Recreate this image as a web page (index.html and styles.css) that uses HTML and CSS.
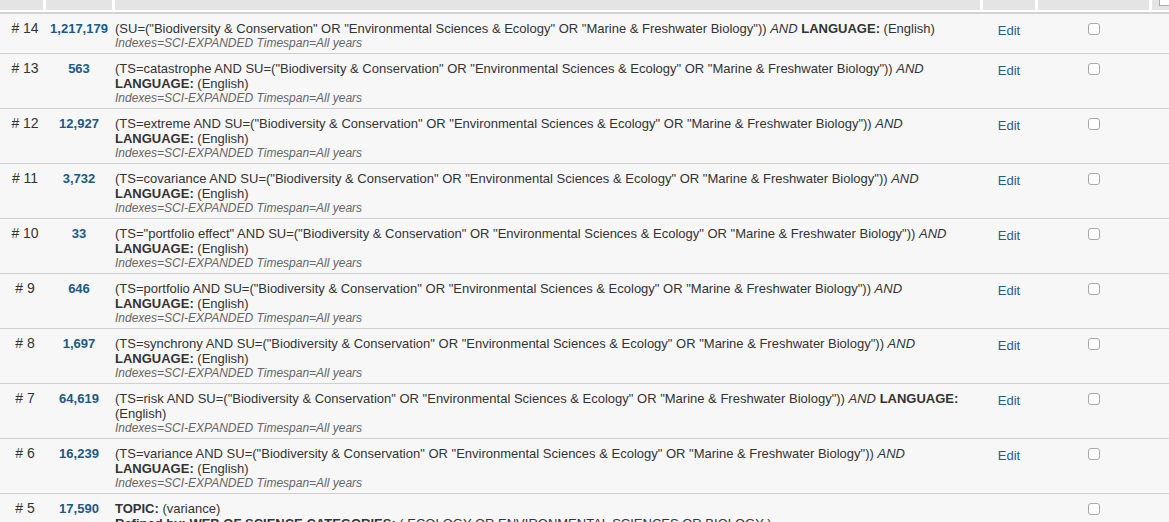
FILE: index.html
```html
<!DOCTYPE html>
<html>
<head>
<meta charset="utf-8">
<link rel="stylesheet" href="styles.css">
</head>
<body>
<div class="history">
  <div class="head">
    <div class="hcell"></div>
    <div class="hcell"></div>
    <div class="hcell"></div>
    <div class="hcell"></div>
    <div class="hcell"></div>
    <div class="hcell last"><span class="stub"></span></div>
  </div>
  <div class="headline"></div>

  <div class="row">
    <div class="num"># 14</div>
    <div class="count">1,217,179</div>
    <div class="query">(SU=("Biodiversity &amp; Conservation" OR "Environmental Sciences &amp; Ecology" OR "Marine &amp; Freshwater Biology")) <i>AND</i> <b>LANGUAGE:</b> (English)<div class="idx">Indexes=SCI-EXPANDED Timespan=All years</div></div>
    <div class="edit"><a href="#">Edit</a></div>
    <div class="chk"><input type="checkbox"></div>
    <div></div>
  </div>

  <div class="row">
    <div class="num"># 13</div>
    <div class="count">563</div>
    <div class="query">(TS=catastrophe AND SU=("Biodiversity &amp; Conservation" OR "Environmental Sciences &amp; Ecology" OR "Marine &amp; Freshwater Biology")) <i>AND</i> <b>LANGUAGE:</b> (English)<div class="idx">Indexes=SCI-EXPANDED Timespan=All years</div></div>
    <div class="edit"><a href="#">Edit</a></div>
    <div class="chk"><input type="checkbox"></div>
    <div></div>
  </div>

  <div class="row">
    <div class="num"># 12</div>
    <div class="count">12,927</div>
    <div class="query">(TS=extreme AND SU=("Biodiversity &amp; Conservation" OR "Environmental Sciences &amp; Ecology" OR "Marine &amp; Freshwater Biology")) <i>AND</i> <b>LANGUAGE:</b> (English)<div class="idx">Indexes=SCI-EXPANDED Timespan=All years</div></div>
    <div class="edit"><a href="#">Edit</a></div>
    <div class="chk"><input type="checkbox"></div>
    <div></div>
  </div>

  <div class="row">
    <div class="num"># 11</div>
    <div class="count">3,732</div>
    <div class="query">(TS=covariance AND SU=("Biodiversity &amp; Conservation" OR "Environmental Sciences &amp; Ecology" OR "Marine &amp; Freshwater Biology")) <i>AND</i> <b>LANGUAGE:</b> (English)<div class="idx">Indexes=SCI-EXPANDED Timespan=All years</div></div>
    <div class="edit"><a href="#">Edit</a></div>
    <div class="chk"><input type="checkbox"></div>
    <div></div>
  </div>

  <div class="row">
    <div class="num"># 10</div>
    <div class="count">33</div>
    <div class="query">(TS="portfolio effect" AND SU=("Biodiversity &amp; Conservation" OR "Environmental Sciences &amp; Ecology" OR "Marine &amp; Freshwater Biology")) <i>AND</i> <b>LANGUAGE:</b> (English)<div class="idx">Indexes=SCI-EXPANDED Timespan=All years</div></div>
    <div class="edit"><a href="#">Edit</a></div>
    <div class="chk"><input type="checkbox"></div>
    <div></div>
  </div>

  <div class="row">
    <div class="num"># 9</div>
    <div class="count">646</div>
    <div class="query">(TS=portfolio AND SU=("Biodiversity &amp; Conservation" OR "Environmental Sciences &amp; Ecology" OR "Marine &amp; Freshwater Biology")) <i>AND</i> <b>LANGUAGE:</b> (English)<div class="idx">Indexes=SCI-EXPANDED Timespan=All years</div></div>
    <div class="edit"><a href="#">Edit</a></div>
    <div class="chk"><input type="checkbox"></div>
    <div></div>
  </div>

  <div class="row">
    <div class="num"># 8</div>
    <div class="count">1,697</div>
    <div class="query">(TS=synchrony AND SU=("Biodiversity &amp; Conservation" OR "Environmental Sciences &amp; Ecology" OR "Marine &amp; Freshwater Biology")) <i>AND</i> <b>LANGUAGE:</b> (English)<div class="idx">Indexes=SCI-EXPANDED Timespan=All years</div></div>
    <div class="edit"><a href="#">Edit</a></div>
    <div class="chk"><input type="checkbox"></div>
    <div></div>
  </div>

  <div class="row">
    <div class="num"># 7</div>
    <div class="count">64,619</div>
    <div class="query">(TS=risk AND SU=("Biodiversity &amp; Conservation" OR "Environmental Sciences &amp; Ecology" OR "Marine &amp; Freshwater Biology")) <i>AND</i> <b>LANGUAGE:</b> (English)<div class="idx">Indexes=SCI-EXPANDED Timespan=All years</div></div>
    <div class="edit"><a href="#">Edit</a></div>
    <div class="chk"><input type="checkbox"></div>
    <div></div>
  </div>

  <div class="row">
    <div class="num"># 6</div>
    <div class="count">16,239</div>
    <div class="query">(TS=variance AND SU=("Biodiversity &amp; Conservation" OR "Environmental Sciences &amp; Ecology" OR "Marine &amp; Freshwater Biology")) <i>AND</i> <b>LANGUAGE:</b> (English)<div class="idx">Indexes=SCI-EXPANDED Timespan=All years</div></div>
    <div class="edit"><a href="#">Edit</a></div>
    <div class="chk"><input type="checkbox"></div>
    <div></div>
  </div>

  <div class="row">
    <div class="num"># 5</div>
    <div class="count">17,590</div>
    <div class="query"><b>TOPIC:</b> (variance)<div><b>Refined by: WEB OF SCIENCE CATEGORIES:</b> ( ECOLOGY OR ENVIRONMENTAL SCIENCES OR BIOLOGY )</div><div class="idx">Indexes=SCI-EXPANDED Timespan=All years</div></div>
    <div class="edit"></div>
    <div class="chk"><input type="checkbox"></div>
    <div></div>
  </div>
</div>
</body>
</html>
```

FILE: styles.css
```css
html, body {
  margin: 0;
  padding: 0;
  background: #f7f7f7;
  overflow: hidden;
}

.history {
  font-family: "Liberation Sans", Arial, Helvetica, sans-serif;
  font-size: 13px;
  line-height: 15px;
  color: #333;
  width: 1169px;
}

.head {
  display: grid;
  grid-template-columns: 43px 66px 865px 52px 111px 17px;
  column-gap: 3px;
  background: #fff;
  padding-bottom: 2px;
}

.hcell {
  height: 10px;
  background: #e4e4e4;
}

.hcell.last {
  position: relative;
}

.stub {
  position: absolute;
  left: 7px;
  top: 0;
  width: 12px;
  height: 5px;
  background: #fff;
  border: 1px solid #aaa;
  border-top: none;
}

.headline {
  height: 2px;
  background: #d2d2d2;
}

.row {
  display: grid;
  grid-template-columns: 43px 66px 865px 52px 111px 17px;
  column-gap: 3px;
  border-bottom: 1px solid #d0d0d0;
  padding: 7px 0 2px;
}

.num {
  text-align: center;
  padding-left: 7px;
  font-size: 14px;
}

.count {
  text-align: center;
  font-weight: bold;
  color: #1b5a83;
}

.query {
  padding-right: 18px;
}

.query i {
  font-style: italic;
}

.idx {
  font-size: 12px;
  font-style: italic;
  color: #666;
}

.edit {
  text-align: center;
  padding-top: 2px;
}

.edit a {
  color: #1f5f8e;
  text-decoration: none;
}

.chk {
  display: flex;
  justify-content: center;
  align-items: flex-start;
  padding-top: 2px;
}

.chk input {
  appearance: none;
  -webkit-appearance: none;
  margin: 0;
  width: 12px;
  height: 12px;
  border: 1px solid #a8a8a8;
  border-radius: 3px;
  background: #fff;
}
```
